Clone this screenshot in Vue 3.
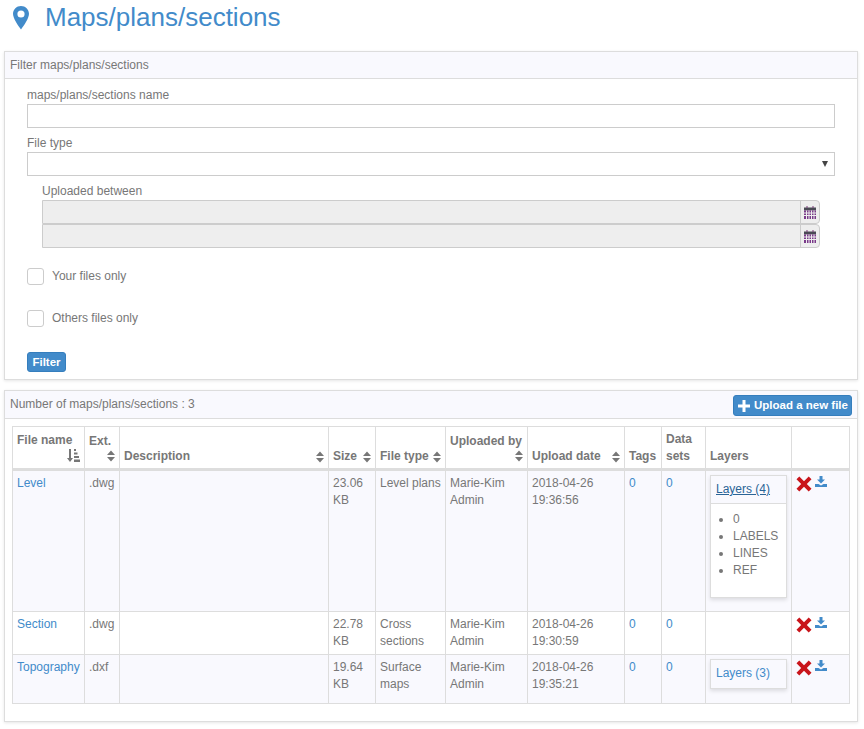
<script setup>
const columns = [
  { label: 'File name', width: 72, icon: 'sorted' },
  { label: 'Ext.', width: 35, icon: 'sort' },
  { label: 'Description', width: 209, icon: 'sort', inline: true },
  { label: 'Size', width: 47, icon: 'sort', inline: true },
  { label: 'File type', width: 70, icon: 'sort', inline: true },
  { label: 'Uploaded by', width: 82, icon: 'sort' },
  { label: 'Upload date', width: 97, icon: 'sort', inline: true },
  { label: 'Tags', width: 37 },
  { label: 'Data sets', width: 44 },
  { label: 'Layers', width: 86 },
  { label: '', width: 58 }
];

const files = [
  {
    name: 'Level',
    ext: '.dwg',
    size: '23.06 KB',
    type: 'Level plans',
    user: 'Marie-Kim Admin',
    date: '2018-04-26 19:36:56',
    layerTitle: 'Layers (4)',
    layers: ['0', 'LABELS', 'LINES', 'REF']
  },
  {
    name: 'Section',
    ext: '.dwg',
    size: '22.78 KB',
    type: 'Cross sections',
    user: 'Marie-Kim Admin',
    date: '2018-04-26 19:30:59'
  },
  {
    name: 'Topography',
    ext: '.dxf',
    size: '19.64 KB',
    type: 'Surface maps',
    user: 'Marie-Kim Admin',
    date: '2018-04-26 19:35:21',
    layerTitle: 'Layers (3)'
  }
];
</script>

<template>
  <div class="page">
    <h1 class="title">
      <svg class="pin" viewBox="0 0 16 24" width="16" height="24">
        <path fill="#428bca" fill-rule="evenodd" d="M8 0C3.6 0 0 3.4 0 7.8c0 4.6 5 11.6 8 15.7 3-4.1 8-11.1 8-15.7C16 3.4 12.4 0 8 0zm0 4.4a3.6 3.6 0 1 1 0 7.2 3.6 3.6 0 0 1 0-7.2z" />
      </svg>
      <span>Maps/plans/sections</span>
    </h1>

    <section class="panel filter-panel">
      <div class="panel-heading">Filter maps/plans/sections</div>
      <form class="filter-form">
        <label class="field-label">maps/plans/sections name</label>
        <input class="text-input" type="text" />

        <label class="field-label file-type">File type</label>
        <div class="select-box"><span class="caret"></span></div>

        <div class="date-group">
          <label class="field-label">Uploaded between</label>
          <div v-for="n in 2" :key="n" class="date-row">
            <div class="date-input"></div>
            <div class="date-addon">
              <svg viewBox="0 0 12 13" width="12" height="13">
                <rect x="0" y="1.5" width="12" height="3" fill="#4a4a55" />
                <rect x="2.5" y="0" width="1" height="2" fill="#7a3b7a" />
                <rect x="8.5" y="0" width="1" height="2" fill="#7a3b7a" />
                <rect x="0" y="4.5" width="12" height="8.5" fill="#7a3a8a" />
                <path stroke="#eee" stroke-width="1" d="M0 7h12M0 9.5h12M2.5 4.5v8.5M5 4.5v8.5M7.5 4.5v8.5M10 4.5v8.5" />
              </svg>
            </div>
          </div>
        </div>

        <label class="check-row first-check"><span class="check"></span>Your files only</label>
        <label class="check-row second-check"><span class="check"></span>Others files only</label>

        <button class="btn filter-btn" type="button">Filter</button>
      </form>
    </section>

    <section class="panel results-panel">
      <div class="panel-heading results-heading">
        <span>Number of maps/plans/sections : 3</span>
        <button class="btn upload-btn" type="button">
          <svg viewBox="0 0 12 12" width="12" height="12">
            <path fill="#fff" d="M4.5 0h3v4.5H12v3H7.5V12h-3V7.5H0v-3h4.5z" />
          </svg>
          Upload a new file
        </button>
      </div>

      <div class="results-body">
        <table class="files">
          <colgroup>
            <col v-for="col in columns" :key="col.label" :style="{ width: col.width + 'px' }" />
          </colgroup>
          <thead>
            <tr>
              <th v-for="col in columns" :key="col.label">
                <div :class="['th-inner', { inline: col.inline, stacked: col.icon && !col.inline }]">
                  <span>{{ col.label }}</span>
                  <svg v-if="col.icon === 'sort'" class="sort" viewBox="0 0 8 12" width="8" height="12">
                    <path fill="#777" d="M4 0.5 8 5H0zM4 11.5 0 7h8z" />
                  </svg>
                  <svg v-if="col.icon === 'sorted'" class="sort" viewBox="0 0 13 13" width="13" height="13">
                    <path fill="#777" d="M2 0h2v9h2l-3 4-3-4h2zM7 0h2v2H7zM7 3.5h3.500v2H7zM7 7h5v2H7zM7 10.500h6V13H7z" />
                  </svg>
                </div>
              </th>
            </tr>
          </thead>
          <tbody>
            <tr v-for="file in files" :key="file.name">
              <td><a class="link">{{ file.name }}</a></td>
              <td>{{ file.ext }}</td>
              <td></td>
              <td>{{ file.size }}</td>
              <td>{{ file.type }}</td>
              <td>{{ file.user }}</td>
              <td>{{ file.date }}</td>
              <td><a class="link">0</a></td>
              <td><a class="link">0</a></td>
              <td class="layers-cell">
                <div v-if="file.layerTitle" class="layers-box">
                  <div :class="['layers-title', { open: file.layers }]">
                    <a class="link">{{ file.layerTitle }}</a>
                  </div>
                  <div v-if="file.layers" class="layers-list">
                    <ul>
                      <li v-for="layer in file.layers" :key="layer">{{ layer }}</li>
                    </ul>
                  </div>
                </div>
              </td>
              <td>
                <div class="actions">
                  <svg viewBox="0 0 16 16" width="16" height="16">
                    <path fill="#c9151b" d="M3.300 0.500 8 5.200 12.700 0.500 15.500 3.300 10.800 8l4.700 4.700-2.800 2.800L8 10.800l-4.700 4.700-2.800-2.800L5.200 8 0.500 3.300z" />
                  </svg>
                  <svg class="download" viewBox="0 0 12 11" width="12" height="11">
                    <path fill="#428bca" d="M4.500 0h3v3.500H10L6 7.500 2 3.500h2.500zM0 8h3.500L6 9.500 8.500 8H12v3H0z" />
                  </svg>
                </div>
              </td>
            </tr>
          </tbody>
        </table>
      </div>
    </section>
  </div>
</template>

<style scoped>
.page {
  width: 864px;
  height: 729px;
  overflow: hidden;
  padding: 0 6px 0 4px;
  box-sizing: border-box;
  font-family: "Liberation Sans", Arial, sans-serif;
  font-size: 12px;
  line-height: 17px;
  color: #777;
  background: #fff;
}

.title {
  display: flex;
  align-items: center;
  gap: 16px;
  height: 51px;
  margin: 0;
  padding: 0 0 16px 9px;
  box-sizing: border-box;
  font-size: 26px;
  font-weight: 400;
  line-height: 35px;
  color: #428bca;
}

.pin {
  flex: none;
}

.panel {
  border: 1px solid #ddd;
  background: #fff;
  box-shadow: 0 1px 3px rgba(0, 0, 0, 0.1);
}

.panel-heading {
  height: 27px;
  padding: 5px;
  box-sizing: border-box;
  border-bottom: 1px solid #ddd;
  background: #f9f9fe;
}

.filter-panel {
  height: 329px;
  box-sizing: border-box;
}

.filter-form {
  padding: 7px 22px 0;
}

.field-label {
  display: block;
  height: 17px;
  margin-bottom: 1px;
  line-height: 19px;
}

.text-input {
  display: block;
  width: 808px;
  height: 24px;
  padding: 0;
  box-sizing: border-box;
  border: 1px solid #ccc;
  background: #fff;
}

.file-type {
  margin-top: 6px;
}

.select-box {
  position: relative;
  width: 808px;
  height: 24px;
  box-sizing: border-box;
  border: 1px solid #ccc;
}

.caret {
  position: absolute;
  right: 6px;
  top: 8px;
  border-left: 3px solid transparent;
  border-right: 3px solid transparent;
  border-top: 6px solid #444;
}

.date-group {
  margin: 6px 0 0 15px;
  width: 778px;
}

.date-row {
  display: flex;
  height: 24px;
  box-sizing: border-box;
  border: 1px solid #ccc;
  border-radius: 0 4px 4px 0;
  background: #eee;
}

.date-input {
  flex: 1;
}

.date-addon {
  display: flex;
  align-items: center;
  justify-content: center;
  width: 19px;
  border-left: 1px solid #ccc;
  box-sizing: border-box;
}

.check-row {
  display: flex;
  align-items: center;
  height: 17px;
}

.first-check {
  margin-top: 20px;
}

.second-check {
  margin-top: 25px;
}

.check {
  width: 17px;
  height: 17px;
  margin-right: 8px;
  box-sizing: border-box;
  border: 1px solid #ccc;
  border-radius: 3px;
  background: #fff;
}

.btn {
  border: 1px solid #357ebd;
  border-radius: 3px;
  background: #428bca;
  color: #fff;
  font-family: inherit;
  font-size: 12px;
  font-weight: 700;
  line-height: 17px;
  padding: 0;
}

.filter-btn {
  display: block;
  width: 39px;
  height: 20px;
  margin-top: 25px;
  font-weight: 700;
  font-size: 11.5px;
}

.results-panel {
  height: 332px;
  margin-top: 10px;
  box-sizing: border-box;
}

.results-heading {
  display: flex;
  align-items: center;
  justify-content: space-between;
  height: 28px;
  padding: 0 5px 0 5px;
}

.upload-btn {
  display: flex;
  align-items: center;
  gap: 4px;
  width: 119px;
  height: 21px;
  padding: 0 0 0 4px;
  margin-top: 2px;
  font-size: 11.5px;
  white-space: nowrap;
}

.results-body {
  padding: 7px 7px 0;
}

.files {
  table-layout: fixed;
  width: 837px;
  border-collapse: collapse;
  border: 1px solid #ddd;
}

th,
td {
  border: 1px solid #ddd;
  padding: 4px;
  vertical-align: top;
  text-align: left;
  word-wrap: break-word;
}

th {
  height: 41px;
  padding: 0 4px;
  vertical-align: bottom;
  font-weight: 700;
  border-bottom: 3px solid #ddd;
}

.th-inner {
  padding-bottom: 3px;
}

.th-inner.inline {
  display: flex;
  align-items: center;
  justify-content: space-between;
}

.th-inner.stacked {
  padding-bottom: 6px;
}

.th-inner.stacked .sort {
  display: block;
  margin-left: auto;
}

.sort {
  flex: none;
}

tbody tr:nth-child(odd) {
  background: #f9f9fe;
}

tbody tr:nth-child(1) {
  height: 142px;
}

tbody tr:nth-child(2) {
  height: 43px;
}

tbody tr:nth-child(3) {
  height: 49px;
}

td {
  padding: 4px;
}

.link {
  color: #428bca;
}

.layers-box {
  width: 77px;
  margin-top: 0;
  box-sizing: border-box;
  border: 1px solid #ddd;
  background: inherit;
  box-shadow: 0 2px 4px rgba(0, 0, 0, 0.12);
}

.layers-title {
  height: 28px;
  padding: 5px;
  box-sizing: border-box;
}

.layers-title.open {
  background: #f9f9fe;
  border-bottom: 1px solid #ddd;
}

.layers-title.open .link {
  color: #2a6496;
  text-decoration: underline;
}

.layers-list {
  background: #fff;
  height: 93px;
  padding-top: 7px;
  box-sizing: border-box;
}

.layers-list ul {
  margin: 0;
  padding-left: 22px;
}

.actions {
  display: flex;
  align-items: flex-start;
  gap: 3px;
  padding-top: 1px;
}

.download {
  margin-top: 0;
}
</style>

<style>
html,
body {
  background: #fff;
}
</style>
